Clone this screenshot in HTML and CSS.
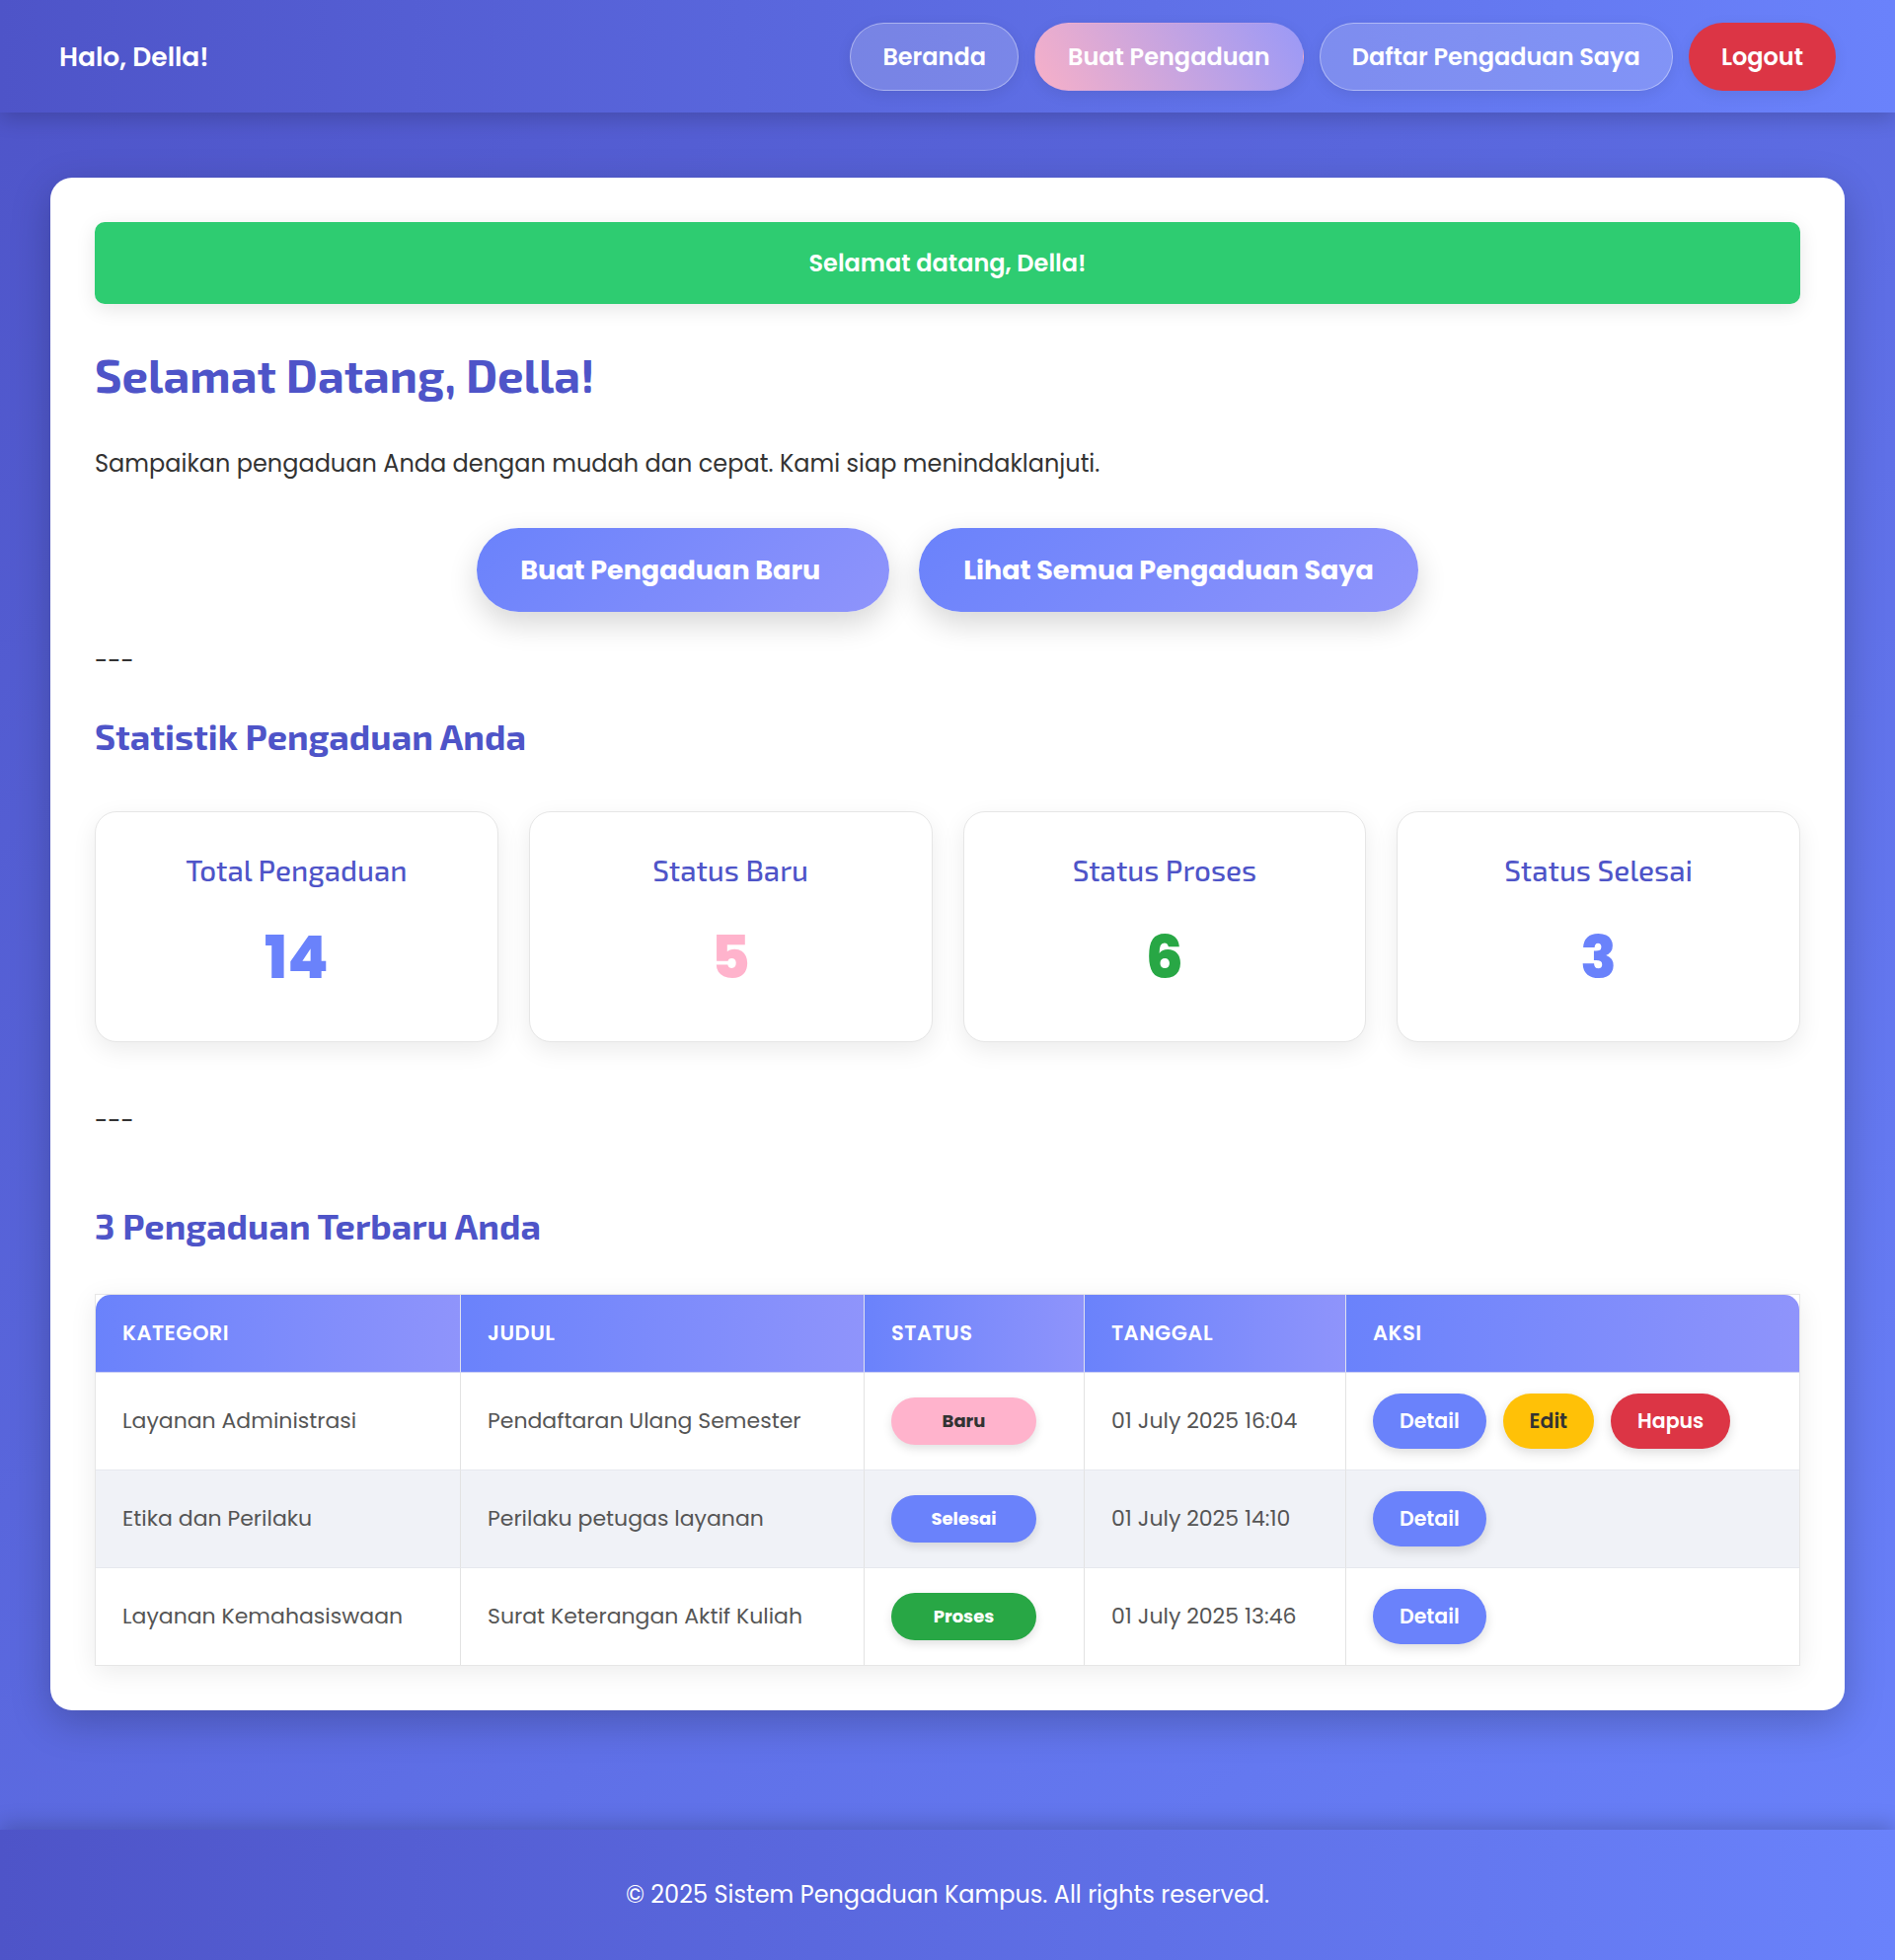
FILE: index.html
```html
<!DOCTYPE html>
<html lang="id">
<head>
<meta charset="utf-8">
<title>Beranda - Sistem Pengaduan Kampus</title>
<link rel="stylesheet" href="styles.css">
</head>
<body>
<nav class="navbar">
  <div class="brand">Halo, Della!</div>
  <div class="nav-links">
    <a class="nav-link" href="#">Beranda</a>
    <a class="nav-link active" href="#">Buat Pengaduan</a>
    <a class="nav-link" href="#">Daftar Pengaduan Saya</a>
    <a class="nav-link logout" href="#">Logout</a>
  </div>
</nav>

<main class="main">
  <section class="card">
    <div class="alert">Selamat datang, Della!</div>
    <h1 class="title">Selamat Datang, Della!</h1>
    <p class="lead">Sampaikan pengaduan Anda dengan mudah dan cepat. Kami siap menindaklanjuti.</p>
    <div class="cta">
      <a class="btn-cta btn-cta-main" href="#">Buat Pengaduan Baru</a>
      <a class="btn-cta" href="#">Lihat Semua Pengaduan Saya</a>
    </div>
    <p class="sep">---</p>
    <h2 class="section-title">Statistik Pengaduan Anda</h2>
    <div class="stats">
      <div class="stat-card">
        <h3 class="stat-title">Total Pengaduan</h3>
        <p class="stat-num num-blue">14</p>
      </div>
      <div class="stat-card">
        <h3 class="stat-title">Status Baru</h3>
        <p class="stat-num num-pink">5</p>
      </div>
      <div class="stat-card">
        <h3 class="stat-title">Status Proses</h3>
        <p class="stat-num num-green">6</p>
      </div>
      <div class="stat-card">
        <h3 class="stat-title">Status Selesai</h3>
        <p class="stat-num num-blue">3</p>
      </div>
    </div>
    <p class="sep sep-2">---</p>
    <h2 class="section-title section-title-2">3 Pengaduan Terbaru Anda</h2>
    <div class="table-wrap">
      <table class="table">
        <colgroup>
          <col class="c1"><col class="c2"><col class="c3"><col class="c4"><col class="c5">
        </colgroup>
        <thead>
          <tr>
            <th>Kategori</th>
            <th>Judul</th>
            <th>Status</th>
            <th>Tanggal</th>
            <th>Aksi</th>
          </tr>
        </thead>
        <tbody>
          <tr>
            <td>Layanan Administrasi</td>
            <td>Pendaftaran Ulang Semester</td>
            <td><span class="badge badge-baru">Baru</span></td>
            <td>01 July 2025 16:04</td>
            <td><div class="actions"><a class="btn btn-detail" href="#">Detail</a><a class="btn btn-edit" href="#">Edit</a><a class="btn btn-hapus" href="#">Hapus</a></div></td>
          </tr>
          <tr class="alt">
            <td>Etika dan Perilaku</td>
            <td>Perilaku petugas layanan</td>
            <td><span class="badge badge-selesai">Selesai</span></td>
            <td>01 July 2025 14:10</td>
            <td><div class="actions"><a class="btn btn-detail" href="#">Detail</a></div></td>
          </tr>
          <tr>
            <td>Layanan Kemahasiswaan</td>
            <td>Surat Keterangan Aktif Kuliah</td>
            <td><span class="badge badge-proses">Proses</span></td>
            <td>01 July 2025 13:46</td>
            <td><div class="actions"><a class="btn btn-detail" href="#">Detail</a></div></td>
          </tr>
        </tbody>
      </table>
    </div>
  </section>
</main>

<footer class="footer">
  <p>© 2025 Sistem Pengaduan Kampus. All rights reserved.</p>
</footer>
</body>
</html>
```

FILE: styles.css
```css
* { box-sizing: border-box; }

html, body { margin: 0; padding: 0; }

body {
  min-height: 100vh;
  display: flex;
  flex-direction: column;
  font-family: "Poppins", "Inter", "Open Sans", sans-serif;
  color: #333;
  background: linear-gradient(135deg, #4e54c8 0%, #6a82fb 100%);
}

a { text-decoration: none; color: inherit; }

/* NAVBAR */
.navbar {
  height: 114px;
  display: flex;
  align-items: center;
  justify-content: space-between;
  padding: 0 60px;
  background: linear-gradient(90deg, #4e54c8 0%, #6a82fb 100%);
  box-shadow: 0 6px 20px rgba(0, 0, 0, 0.18);
  position: relative;
  z-index: 2;
}

.brand {
  color: #fff;
  font-weight: 600;
  font-size: 26.5px;
  line-height: 36px;
  padding-top: 2px;
}

.nav-links {
  display: flex;
  gap: 16px;
  align-items: center;
}

.nav-link {
  display: inline-block;
  color: #fff;
  font-weight: 600;
  font-size: 24px;
  line-height: 35px;
  padding: 16px 32px;
  border-radius: 40px;
  border: 1px solid rgba(255, 255, 255, 0.38);
  background: rgba(255, 255, 255, 0.18);
  box-shadow: 0 4px 15px rgba(0, 0, 0, 0.08);
}

.nav-link.active {
  border-color: transparent;
  background: linear-gradient(60deg, #f7b0c8 0%, #9a99f7 100%);
  padding: 16px 33px;
}

.nav-link.logout {
  border-color: transparent;
  background: #dc3545;
}

/* MAIN */
.main {
  flex: 1;
  padding: 66px 51px 120px;
}

.card {
  background: #fff;
  border-radius: 22px;
  padding: 45px;
  box-shadow: 0 12px 40px rgba(0, 0, 0, 0.22);
}

.alert {
  height: 83px;
  display: flex;
  align-items: center;
  justify-content: center;
  background: #2ecc71;
  color: #fff;
  font-weight: 600;
  font-size: 24px;
  border-radius: 10px;
  box-shadow: 0 5px 20px rgba(0, 0, 0, 0.1);
}

.title {
  margin: 41px 0 0;
  font-family: "Exo 2", "Roboto", sans-serif;
  font-weight: 700;
  font-size: 47px;
  line-height: 60px;
  color: #4e54c8;
}

.lead {
  margin: 44px 0 0;
  font-size: 24px;
  line-height: 34px;
  color: #333;
}

.cta {
  margin: 48px 0 33px;
  display: flex;
  justify-content: center;
  gap: 30px;
}

.btn-cta {
  display: inline-block;
  color: #fff;
  font-weight: 700;
  font-size: 27px;
  line-height: 39px;
  padding: 23px 45px;
  border-radius: 45px;
  background: linear-gradient(135deg, #6a82fb 0%, #8f94fb 100%);
  box-shadow: 0 12px 30px rgba(0, 0, 0, 0.16);
}

.btn-cta-main {
  padding: 23px 70px 23px 44px;
}

.sep {
  margin: 0;
  font-size: 24px;
  line-height: 34px;
  color: #333;
}

.section-title {
  margin: 36px 0 0;
  font-family: "Exo 2", "Roboto", sans-serif;
  font-weight: 700;
  font-size: 36px;
  line-height: 46px;
  color: #4e54c8;
}

/* STATS */
.stats {
  margin-top: 53px;
  display: grid;
  grid-template-columns: repeat(4, 1fr);
  gap: 31px;
}

.stat-card {
  border: 1px solid #e6e6e6;
  border-radius: 22px;
  background: #fff;
  text-align: center;
  padding: 41px 20px 49px;
  box-shadow: 0 8px 25px rgba(0, 0, 0, 0.08);
}

.stat-title {
  margin: 0;
  font-family: "Exo 2", "Roboto", sans-serif;
  font-weight: 500;
  font-size: 29.5px;
  line-height: 35px;
  color: #4e54c8;
}

.stat-num {
  margin: 35px 0 0;
  font-weight: 800;
  font-size: 60px;
  line-height: 72px;
}

.num-blue { color: #6a82fb; }
.num-pink { color: #ffb3cc; }
.num-green { color: #28a745; }

.sep-2 { margin-top: 63px; }

.section-title-2 { margin-top: 66px; }

/* TABLE */
.table-wrap {
  margin-top: 46px;
  border: 1px solid #e6e6e6;
  box-shadow: 0 6px 25px rgba(0, 0, 0, 0.08);
}

.table {
  width: 100%;
  border-collapse: separate;
  border-spacing: 0;
  table-layout: fixed;
  border-radius: 15px;
  overflow: hidden;
}

.c1 { width: 370px; }
.c2 { width: 409px; }
.c3 { width: 223px; }
.c4 { width: 265px; }
.c5 { width: auto; }

.table th {
  text-align: left;
  color: #fff;
  font-weight: 600;
  font-size: 21px;
  line-height: 28px;
  text-transform: uppercase;
  letter-spacing: 0.5px;
  padding: 25px 27px;
  background: linear-gradient(90deg, #6a82fb 0%, #8f94fb 100%);
  border-right: 1px solid #dfe1f0;
  border-bottom: 1px solid #c9cdf5;
}

.table td {
  font-size: 22px;
  line-height: 28px;
  color: #555;
  padding: 21px 27px;
  vertical-align: middle;
  border-right: 1px solid #e3e3e3;
  border-bottom: 1px solid #e6e8ee;
}

.table th:last-child,
.table td:last-child { border-right: none; }

.table tbody tr:last-child td { border-bottom: none; }

.table tr.alt td { background: #f0f2f7; }

.badge {
  display: inline-block;
  width: 147px;
  height: 48px;
  line-height: 48px;
  text-align: center;
  border-radius: 24px;
  font-weight: 700;
  font-size: 18px;
  box-shadow: 0 4px 10px rgba(0, 0, 0, 0.12);
}

.badge-baru { background: #ffb3cc; color: #333; }
.badge-selesai { background: #6a82fb; color: #fff; }
.badge-proses { background: #28a745; color: #fff; }

.actions {
  display: flex;
  gap: 17px;
  align-items: center;
}

.btn {
  display: inline-block;
  height: 56px;
  line-height: 56px;
  padding: 0 27px;
  border-radius: 28px;
  font-weight: 600;
  font-size: 20.5px;
  color: #fff;
  box-shadow: 0 4px 12px rgba(0, 0, 0, 0.14);
}

.btn-detail { background: #6a82fb; }
.btn-edit { background: #ffc107; color: #333; }
.btn-hapus { background: #dc3545; }

/* FOOTER */
.footer {
  height: 132px;
  display: flex;
  align-items: center;
  justify-content: center;
  background: linear-gradient(90deg, #4e54c8 0%, #6a82fb 100%);
  box-shadow: 0 -6px 20px rgba(0, 0, 0, 0.18);
  color: #fff;
}

.footer p {
  margin: 0;
  font-size: 24px;
  line-height: 30px;
}
```
